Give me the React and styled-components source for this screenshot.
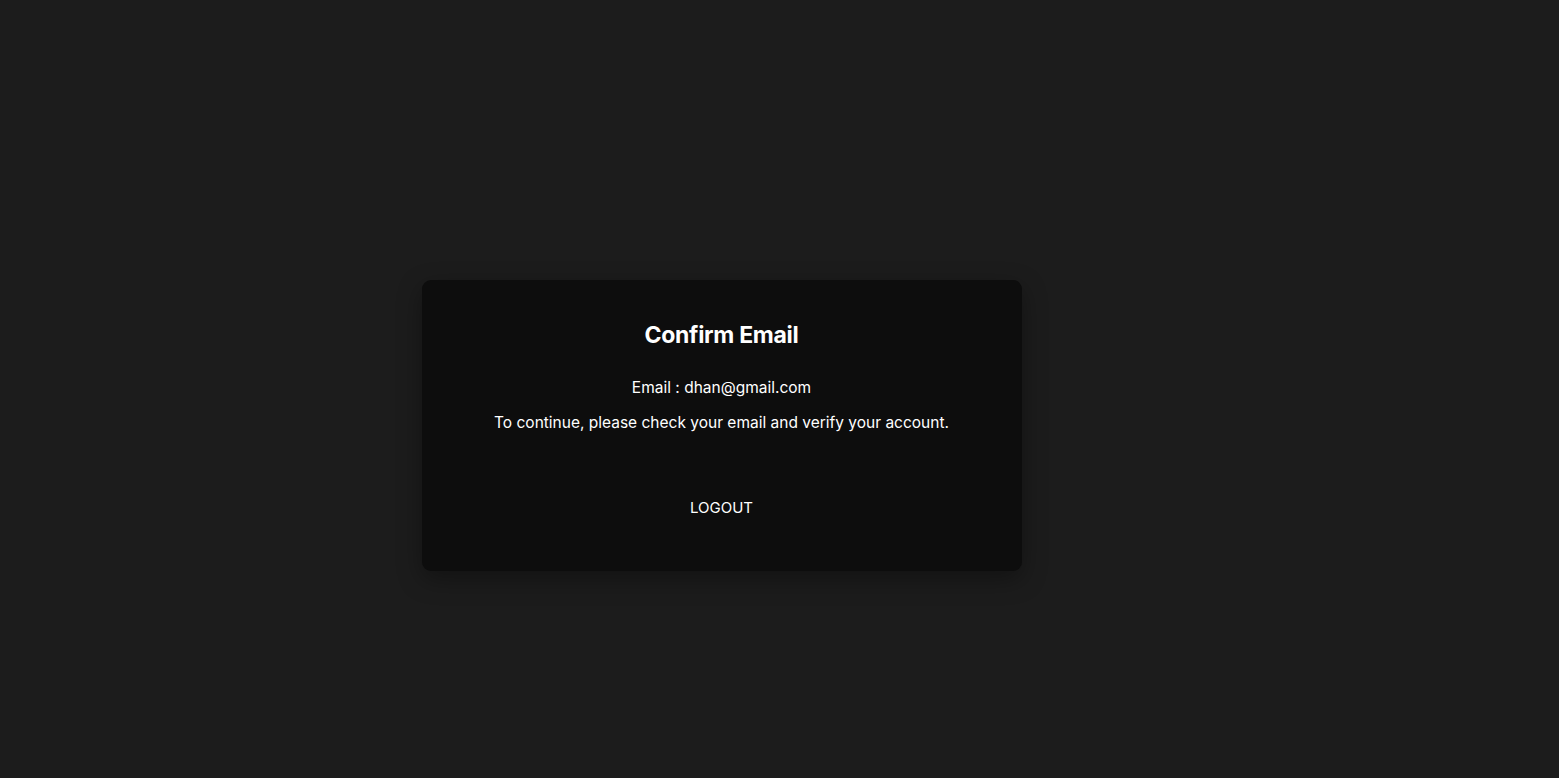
import React from "react";
import styled, { createGlobalStyle } from "styled-components";

const Global = createGlobalStyle`
  html, body { margin: 0; padding: 0; background: #1c1c1c; }
  body { font-family: Inter, "Noto Sans", sans-serif; color: #fff; }
`;

const Page = styled.div`
  min-height: 778px;
  box-sizing: border-box;
  display: flex;
  justify-content: center;
  align-items: flex-start;
  padding: 280px 116px 0 0;
`;

const Card = styled.div`
  width: 600px;
  height: 291px;
  box-sizing: border-box;
  background: #0d0d0d;
  border-radius: 9px;
  box-shadow: 0 8px 24px rgba(0, 0, 0, 0.35);
  display: flex;
  flex-direction: column;
  align-items: center;
  padding-top: 40px;
`;

const Title = styled.h1`
  margin: 0 0 28px;
  font-size: 23px;
  line-height: 30px;
  font-weight: 700;
  letter-spacing: -0.3px;
`;

const Text = styled.p`
  margin: 0 0 ${(p) => p.$gap || 0}px;
  font-size: 15.5px;
  line-height: 20px;
  font-weight: 400;
`;

const Button = styled.button`
  margin-top: 59px;
  background: transparent;
  border: none;
  color: #fff;
  font-family: inherit;
  font-size: 15px;
  line-height: 20px;
  padding: 6px 16px;
  cursor: pointer;
`;

export default function App() {
  return (
    <>
      <Global />
      <Page>
        <Card>
          <Title>Confirm Email</Title>
          <Text $gap={15}>Email : dhan@gmail.com</Text>
          <Text>To continue, please check your email and verify your account.</Text>
          <Button>LOGOUT</Button>
        </Card>
      </Page>
    </>
  );
}
